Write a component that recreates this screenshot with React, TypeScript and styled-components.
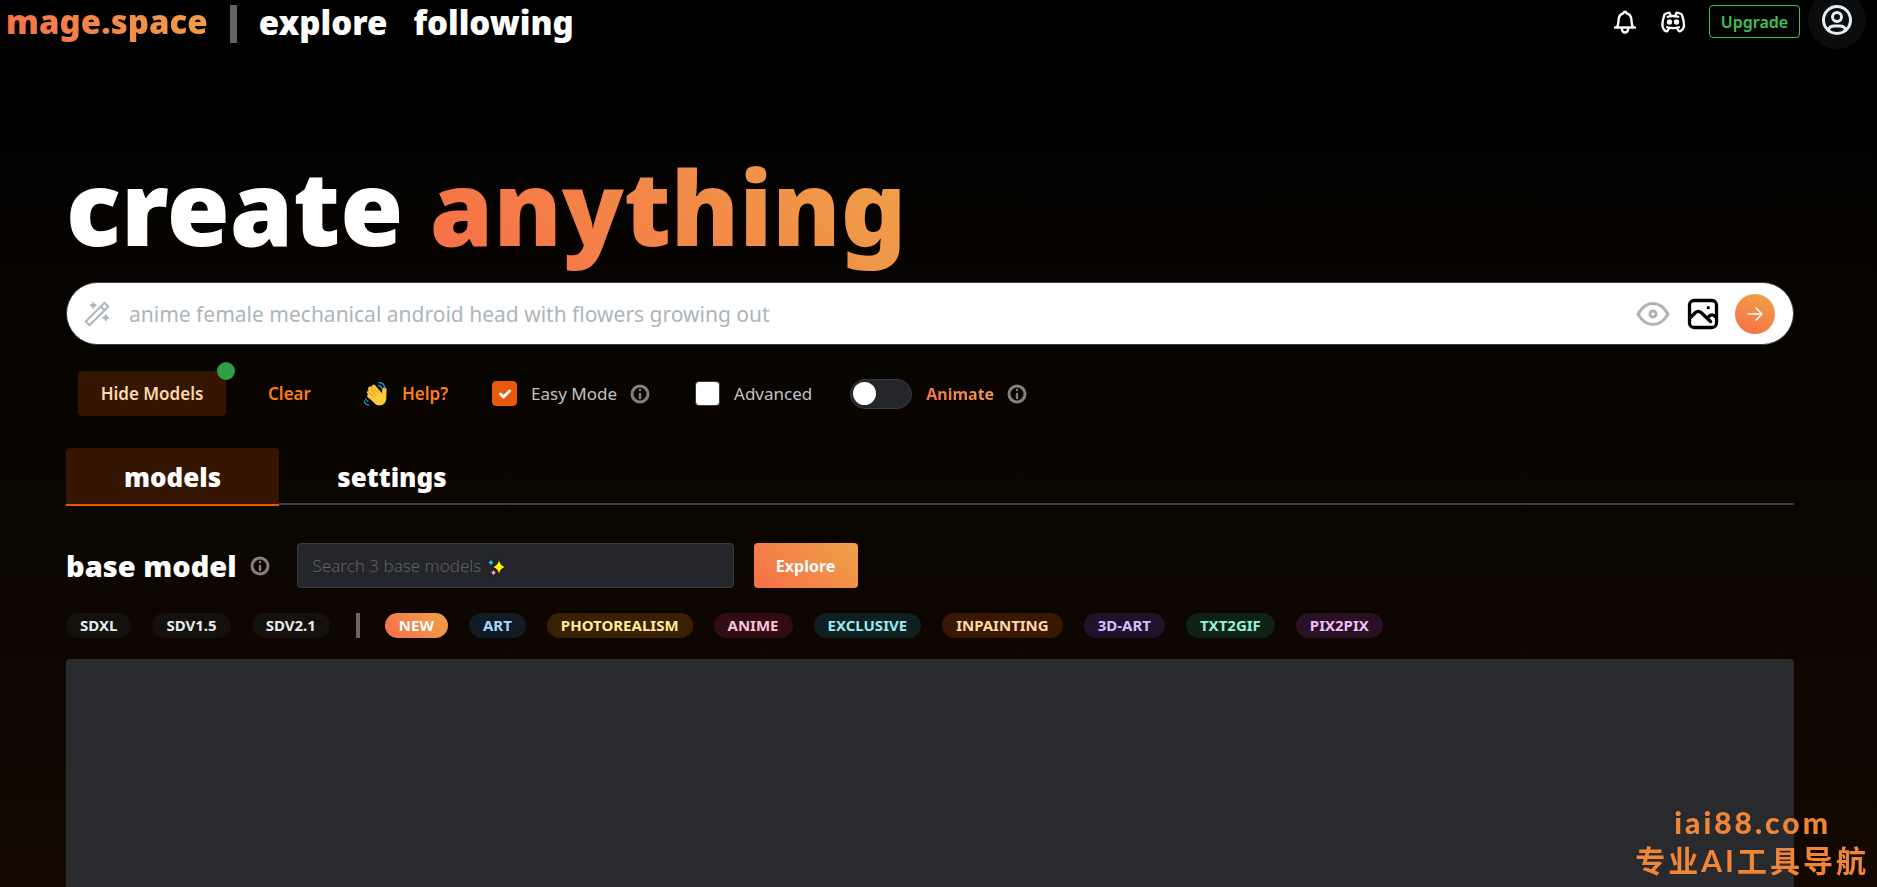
import React from 'react';
import styled, { createGlobalStyle, css } from 'styled-components';

const sunset = 'linear-gradient(45deg, #f76e48 0%, #eea348 100%)';

const GlobalStyle = createGlobalStyle`
  *, *::before, *::after { box-sizing: border-box; }
  html { background: #000; }
  body {
    margin: 0;
    color: #fff;
    font-family: "Noto Sans", "Open Sans", sans-serif;
    font-size: 16px;
  }
  button, input { font: inherit; color: inherit; }
  button { border: 0; background: none; padding: 0; cursor: pointer; }
  a { color: inherit; text-decoration: none; }
  svg { display: block; flex: none; }
`;

const Page = styled.div`
  display: flex;
  flex-direction: column;
  height: 100vh;
  overflow: hidden;
  background: linear-gradient(180deg, #000 0%, #130900 100%);
`;

const Header = styled.header`
  display: flex;
  justify-content: space-between;
  align-items: flex-start;
  height: 46px;
  padding: 0 11px 0 6px;
`;

const HeaderSide = styled.nav`
  display: flex;
  align-items: flex-start;
`;

const gradientFill = css`
  background: ${sunset};
  -webkit-background-clip: text;
  background-clip: text;
  color: transparent;
`;

const GradientText = styled.span`
  ${gradientFill}
`;

const Logo = styled.a`
  display: block;
  ${gradientFill}
  font-size: 33px;
  font-weight: 900;
  line-height: 44px;
`;

const HeaderRule = styled.span`
  width: 7px;
  height: 38px;
  margin: 5px 22px 0;
  background: #666461;
`;

const NavLink = styled.a`
  margin-right: 26px;
  font-size: 33px;
  font-weight: 900;
  line-height: 46px;
`;

const HeaderIcon = styled.button`
  display: grid;
  place-items: center;
  width: 28px;
  height: 44px;
  margin-right: 20px;
`;

const Upgrade = styled.button`
  width: 91px;
  height: 33px;
  margin: 5px 8px 0 2px;
  border: 1px solid #40c057;
  border-radius: 4px;
  color: #40c057;
  font-weight: 600;
`;

const Avatar = styled.button`
  display: grid;
  place-items: center;
  width: 58px;
  height: 58px;
  margin-top: -9px;
  border-radius: 50%;
  background: #0b0c0d;
  color: #e9ecef;
`;

const Main = styled.main`
  display: flex;
  flex: 1;
  flex-direction: column;
  padding: 111px 83px 0 66px;
`;

const Title = styled.h1`
  margin: 0 0 25px;
  font-size: 102px;
  font-weight: 900;
  line-height: 100px;
`;

const PromptBar = styled.form`
  display: flex;
  align-items: center;
  height: 63px;
  padding: 0 18px 0 15px;
  border: 1px solid #373a40;
  border-radius: 32px;
  background: #fff;
  color: #adb5bd;
`;

const PromptInput = styled.input`
  flex: 1;
  height: 60px;
  margin: 0 17px;
  padding: 0;
  border: 0;
  outline: 0;
  background: none;
  color: #25262b;
  font-size: 21px;
  &::placeholder { color: #adb5bd; opacity: 1; }
`;

const PromptAction = styled.button<{ $color: string }>`
  margin-right: 14px;
  color: ${(p) => p.$color};
`;

const Submit = styled.button`
  display: grid;
  place-items: center;
  width: 40px;
  height: 40px;
  border-radius: 50%;
  background: linear-gradient(20deg, #f76e48 0%, #eea348 100%);
  color: #fff;
`;

const Controls = styled.div`
  display: flex;
  align-items: center;
  gap: 21px;
  height: 45px;
  margin: 26px 0 32px 12px;
  font-size: 17px;
`;

const HideButton = styled.button`
  position: relative;
  width: 148px;
  height: 45px;
  border-radius: 4px;
  background: #351602;
  color: #ffd8a8;
  font-weight: 600;
  &::after {
    content: "";
    position: absolute;
    top: -9px;
    right: -9px;
    width: 18px;
    height: 18px;
    border-radius: 50%;
    background: #2f9e44;
  }
`;

const SubtleButton = styled.button<{ $pad: number }>`
  display: flex;
  align-items: center;
  gap: 14px;
  height: 45px;
  padding: 0 ${(p) => p.$pad}px;
  color: #fd7e14;
  font-weight: 600;
`;

const Options = styled.div`
  display: flex;
  align-items: center;
  gap: 38px;
  margin-left: 12px;
`;

const Option = styled.div`
  display: flex;
  align-items: center;
`;

const OptionLabel = styled.label`
  display: flex;
  align-items: center;
  gap: 14px;
  color: #c1c2c5;
  line-height: 24px;
`;

const AnimateText = styled(GradientText)`
  font-size: 16px;
  font-weight: 700;
`;

const TickWrap = styled.span`
  display: grid;
  place-items: center;
  > * { grid-area: 1 / 1; }
  > svg { z-index: 1; pointer-events: none; }
`;

const Tick = styled.input`
  appearance: none;
  width: 25px;
  height: 25px;
  margin: 0;
  border: 1px solid #373a40;
  border-radius: 4px;
  background: #fff;
  &:checked { background: #e8590c; border-color: #e8590c; }
`;

const Switch = styled.input`
  appearance: none;
  display: flex;
  align-items: center;
  width: 62px;
  height: 30px;
  margin: 0;
  padding: 0 2px;
  border: 1px solid #373a40;
  border-radius: 15px;
  background: #25262b;
  &::before {
    content: "";
    width: 23px;
    height: 23px;
    border-radius: 50%;
    background: #fff;
  }
  &:checked::before { margin-left: auto; }
`;

const InfoButton = styled.button`
  display: block;
  margin-left: 6px;
  padding: 0 5px;
  color: #868079;
`;

const Tabs = styled.div`
  display: flex;
  border-bottom: 2px solid #373a40;
`;

const Tab = styled.button<{ $active?: boolean }>`
  height: 58px;
  margin-bottom: -3px;
  padding: 2px 58px 0;
  border-bottom: 2px solid transparent;
  border-radius: 4px 4px 0 0;
  font-size: 26px;
  font-weight: 900;
  line-height: 36px;
  ${(p) => p.$active && css`
    background: #351602;
    border-bottom-color: #e8590c;
  `}
`;

const ModelRow = styled.div`
  display: flex;
  align-items: center;
  height: 45px;
  margin: 38px 0 25px;
`;

const ModelTitle = styled.h2`
  margin: 0;
  font-size: 29px;
  font-weight: 900;
  line-height: 44px;
`;

const SearchBox = styled.div`
  position: relative;
  width: 437px;
  margin: 0 20px;
  > svg {
    position: absolute;
    top: 14px;
    left: 190px;
    pointer-events: none;
  }
`;

const SearchInput = styled.input`
  width: 100%;
  height: 45px;
  padding: 0 15px;
  border: 1px solid #373a40;
  border-radius: 4px;
  background: #25262b;
  font-size: 17px;
  &::placeholder { color: #5c5f66; font-weight: 300; opacity: 1; }
`;

const Explore = styled.button`
  width: 104px;
  height: 45px;
  border-radius: 4px;
  background: ${sunset};
  font-weight: 700;
`;

const Tags = styled.div`
  display: flex;
  flex: none;
  align-items: center;
  gap: 21px;
  height: 25px;
  margin-bottom: 21px;
`;

const Pill = styled.button<{ $bg: string; $fg: string }>`
  height: 25px;
  padding: 0 14px;
  border-radius: 13px;
  background: ${(p) => p.$bg};
  color: ${(p) => p.$fg};
  font-size: 15px;
  font-weight: 700;
  line-height: 25px;
`;

const TagRule = styled.span`
  width: 4px;
  height: 25px;
  margin: 0 4px 0 5px;
  background: #6b6661;
`;

const Results = styled.section`
  flex: 1;
  min-height: 228px;
  border-radius: 4px 4px 0 0;
  background: #292a2d;
`;

const Watermark = styled.aside`
  position: fixed;
  right: 8px;
  bottom: 8px;
  color: #f08437;
  font-family: Lato, "Noto Sans CJK SC", sans-serif;
  font-size: 30px;
  font-weight: 700;
  line-height: 38px;
  letter-spacing: 3px;
  text-align: right;
`;

const Domain = styled.div`
  padding-right: 38px;
  font-weight: 900;
`;

type IconProps = { size: number; stroke?: number; children: React.ReactNode };

const Icon = ({ size, stroke = 2, children }: IconProps) => (
  <svg width={size} height={size} viewBox="0 0 24 24" fill="none" stroke="currentColor"
    strokeWidth={stroke} strokeLinecap="round" strokeLinejoin="round" aria-hidden="true">
    {children}
  </svg>
);

const Info = ({ about }: { about: string }) => (
  <InfoButton type="button" aria-label={`About ${about}`}>
    <Icon size={24} stroke={3}>
      <circle cx="12" cy="12" r="8" />
      <path d="M12 8h.01M12 12v4" strokeWidth="2.4" />
    </Icon>
  </InfoButton>
);

const Wave = () => (
  <svg width="24" height="26" viewBox="0 0 24 26" fill="none" aria-hidden="true">
    <g stroke="#e8a21c" strokeWidth="4.6" strokeLinecap="round">
      <path d="M5.2 11.5l7 7M6.2 7.8l8 8M9.7 6l7 8" />
      <path d="M20.4 8.5l-.6 8" />
    </g>
    <g stroke="#ffc83d" strokeWidth="3.4" strokeLinecap="round">
      <path d="M5.2 11.5l7 7M6.2 7.8l8 8M9.7 6l7 8M4.8 15l6 5" />
      <path d="M20.4 8.5l-.6 8" />
    </g>
    <path d="M7.5 17l9-5 2.500 1.500 3-4 .3 7c.2 5-3 8-7 8-3.500 0-6-3-7.800-7.500z" fill="#ffc83d" />
    <path d="M4.500 11l6 5.600M5.800 7.800l7 6.600M8.400 5.800l6.400 6.600" stroke="#d18f1c" strokeWidth=".8" />
    <g stroke="#1c93b8" strokeWidth="1.300" strokeLinecap="round">
      <path d="M14.500 4.500c2 .3 3.300 1.600 3.700 3.600M15 1.500c3.400.3 5.600 2.500 6 5.600" />
      <path d="M4 20.500c-1.200-.5-2-1.400-2.200-2.800M4.500 24c-2.500-.6-3.800-2-4-4" />
    </g>
  </svg>
);

const Sparkles = () => (
  <svg width="20" height="20" viewBox="0 0 20 20" stroke="#000" strokeWidth=".6" aria-hidden="true">
    <path d="M12 1c.8 5.500 2 7.500 7 9-5 1.500-6.200 3.500-7 9-.8-5.500-2-7.500-7-9 5-1.500 6.200-3.500 7-9z" fill="#fff100" />
    <path d="M4 1c.6 2.800 1.300 3.900 4 4.500-2.700.6-3.400 1.700-4 4.500-.6-2.800-1.300-3.900-4-4.500 2.700-.6 3.400-1.700 4-4.500z" fill="#28c4e8" />
    <path d="M6.500 11.500c.6 2.600 1.300 3.600 4 4.200-2.700.6-3.400 1.600-4 4.200-.6-2.600-1.300-3.600-4-4.200 2.700-.6 3.400-1.600 4-4.200z" fill="#f59ac4" />
  </svg>
);

const neutral = { bg: '#14110d', fg: '#e9ecef' };
const versions = ['SDXL', 'SDV1.5', 'SDV2.1'];
const tags = [
  { name: 'NEW', bg: sunset, fg: '#fff' },
  { name: 'ART', bg: '#111b26', fg: '#a5d8ff' },
  { name: 'PHOTOREALISM', bg: '#3a2002', fg: '#ffec99' },
  { name: 'ANIME', bg: '#310c13', fg: '#fcc2d7' },
  { name: 'EXCLUSIVE', bg: '#0d1f1f', fg: '#99e9f2' },
  { name: 'INPAINTING', bg: '#391802', fg: '#ffd8a8' },
  { name: '3D-ART', bg: '#20122b', fg: '#d0bfff' },
  { name: 'TXT2GIF', bg: '#0d2114', fg: '#96f2d7' },
  { name: 'PIX2PIX', bg: '#291022', fg: '#eebefa' },
];

export default function App() {
  return (
    <Page>
      <GlobalStyle />
      <Header>
        <HeaderSide aria-label="Main">
          <Logo href="#home">mage.space</Logo>
          <HeaderRule />
          <NavLink href="#explore">explore</NavLink>
          <NavLink href="#following">following</NavLink>
        </HeaderSide>
        <HeaderSide aria-label="Account">
          <HeaderIcon type="button" aria-label="Notifications">
            <Icon size={28} stroke={2}>
              <path d="M12 3.200c.8 0 1.200.7 1.300 1.300 2.700.7 4 2.900 4.200 5.600.1 3.300.3 4.800 1.500 6.600h1.500M12 3.200c-.8 0-1.200.7-1.300 1.300-2.700.7-4 2.900-4.200 5.600-.1 3.300-.3 4.800-1.500 6.600H3.500M5 16.700h14M9.300 18.200c.3 1.900 1.300 2.800 2.700 2.800s2.400-.9 2.700-2.800" />
            </Icon>
          </HeaderIcon>
          <HeaderIcon type="button" aria-label="Discord">
            <Icon size={28}>
              <circle cx="9" cy="12" r="1.300" fill="currentColor" />
              <circle cx="15" cy="12" r="1.300" fill="currentColor" />
              <path d="M7.500 7.500c3.500-1 5.500-1 9 0M7 16.500c3.500 1 6.500 1 10 0M15.500 17c0 1 1.500 3 2 3 1.500 0 2.833-1.667 3.500-3 .667-1.667.5-5.833-1.500-11.500-1.457-1.015-3-1.340-4.500-1.500l-1 2.500M8.500 17c0 1-1.356 3-1.832 3-1.429 0-2.698-1.667-3.333-3-.635-1.667-.476-5.833 1.428-11.500C6.151 4.485 7.545 4.160 9 4l1 2.500" />
            </Icon>
          </HeaderIcon>
          <Upgrade type="button">Upgrade</Upgrade>
          <Avatar type="button" aria-label="Profile">
            <Icon size={36}>
              <circle cx="12" cy="12" r="9" />
              <circle cx="12" cy="10" r="3" />
              <path d="M6.168 18.849a4 4 0 0 1 3.832-2.849h4a4 4 0 0 1 3.834 2.855" />
            </Icon>
          </Avatar>
        </HeaderSide>
      </Header>

      <Main>
        <Title>create <GradientText>anything</GradientText></Title>

        <PromptBar onSubmit={(e) => e.preventDefault()}>
          <Icon size={30} stroke={1.5}>
            <path d="M6 21L21 6l-3-3L3 18l3 3M15 6l3 3M9 3a2 2 0 0 0 2 2 2 2 0 0 0-2 2 2 2 0 0 0-2-2 2 2 0 0 0 2-2M19 13a2 2 0 0 0 2 2 2 2 0 0 0-2 2 2 2 0 0 0-2-2 2 2 0 0 0 2-2" />
          </Icon>
          <PromptInput aria-label="Prompt" placeholder="anime female mechanical android head with flowers growing out" />
          <PromptAction type="button" $color="#b2b2b2" aria-label="Visibility">
            <Icon size={36}>
              <circle cx="12" cy="12" r="2" />
              <path d="M22 12c-2.667 4.667-6 7-10 7s-7.333-2.333-10-7c2.667-4.667 6-7 10-7s7.333 2.333 10 7" />
            </Icon>
          </PromptAction>
          <PromptAction type="button" $color="#000" aria-label="Add image">
            <Icon size={36} stroke={2.2}>
              <path d="M15.500 7.800h.01M3 6a3 3 0 0 1 3-3h12a3 3 0 0 1 3 3v12a3 3 0 0 1-3 3H6a3 3 0 0 1-3-3zM3 15l4-4c1.200-1 2.500-1 3.700 0l6.300 6M15 15l1-1.500c1.500-1.300 2.800-1.300 4 .2" />
            </Icon>
          </PromptAction>
          <Submit aria-label="Create">
            <Icon size={24} stroke={1.5}><path d="M5 12h14M13 18l6-6M13 6l6 6" /></Icon>
          </Submit>
        </PromptBar>

        <Controls>
          <HideButton type="button">Hide Models</HideButton>
          <SubtleButton type="button" $pad={21}>Clear</SubtleButton>
          <SubtleButton type="button" $pad={11}><Wave />Help?</SubtleButton>
          <Options>
            <Option>
              <OptionLabel>
                <TickWrap>
                  <Tick type="checkbox" defaultChecked />
                  <Icon size={18} stroke={4}><path d="M6 12l4 4 8-8" stroke="#fff" /></Icon>
                </TickWrap>
                Easy Mode
              </OptionLabel>
              <Info about="easy mode" />
            </Option>
            <OptionLabel>
              <Tick type="checkbox" />
              Advanced
            </OptionLabel>
            <Option>
              <OptionLabel>
                <Switch type="checkbox" role="switch" />
                <AnimateText>Animate</AnimateText>
              </OptionLabel>
              <Info about="animate" />
            </Option>
          </Options>
        </Controls>

        <Tabs role="tablist">
          <Tab type="button" role="tab" aria-selected="true" $active>models</Tab>
          <Tab type="button" role="tab" aria-selected="false">settings</Tab>
        </Tabs>

        <ModelRow>
          <ModelTitle>base model</ModelTitle>
          <Info about="base models" />
          <SearchBox>
            <SearchInput type="text" aria-label="Search base models" placeholder="Search 3 base models" />
            <Sparkles />
          </SearchBox>
          <Explore type="button">Explore</Explore>
        </ModelRow>

        <Tags>
          {versions.map((v) => (
            <Pill key={v} type="button" $bg={neutral.bg} $fg={neutral.fg}>{v}</Pill>
          ))}
          <TagRule />
          {tags.map((t) => (
            <Pill key={t.name} type="button" $bg={t.bg} $fg={t.fg}>{t.name}</Pill>
          ))}
        </Tags>

        <Results aria-label="Models" />
      </Main>

      <Watermark>
        <Domain>iai88.com</Domain>
        <div>专业AI工具导航</div>
      </Watermark>
    </Page>
  );
}
